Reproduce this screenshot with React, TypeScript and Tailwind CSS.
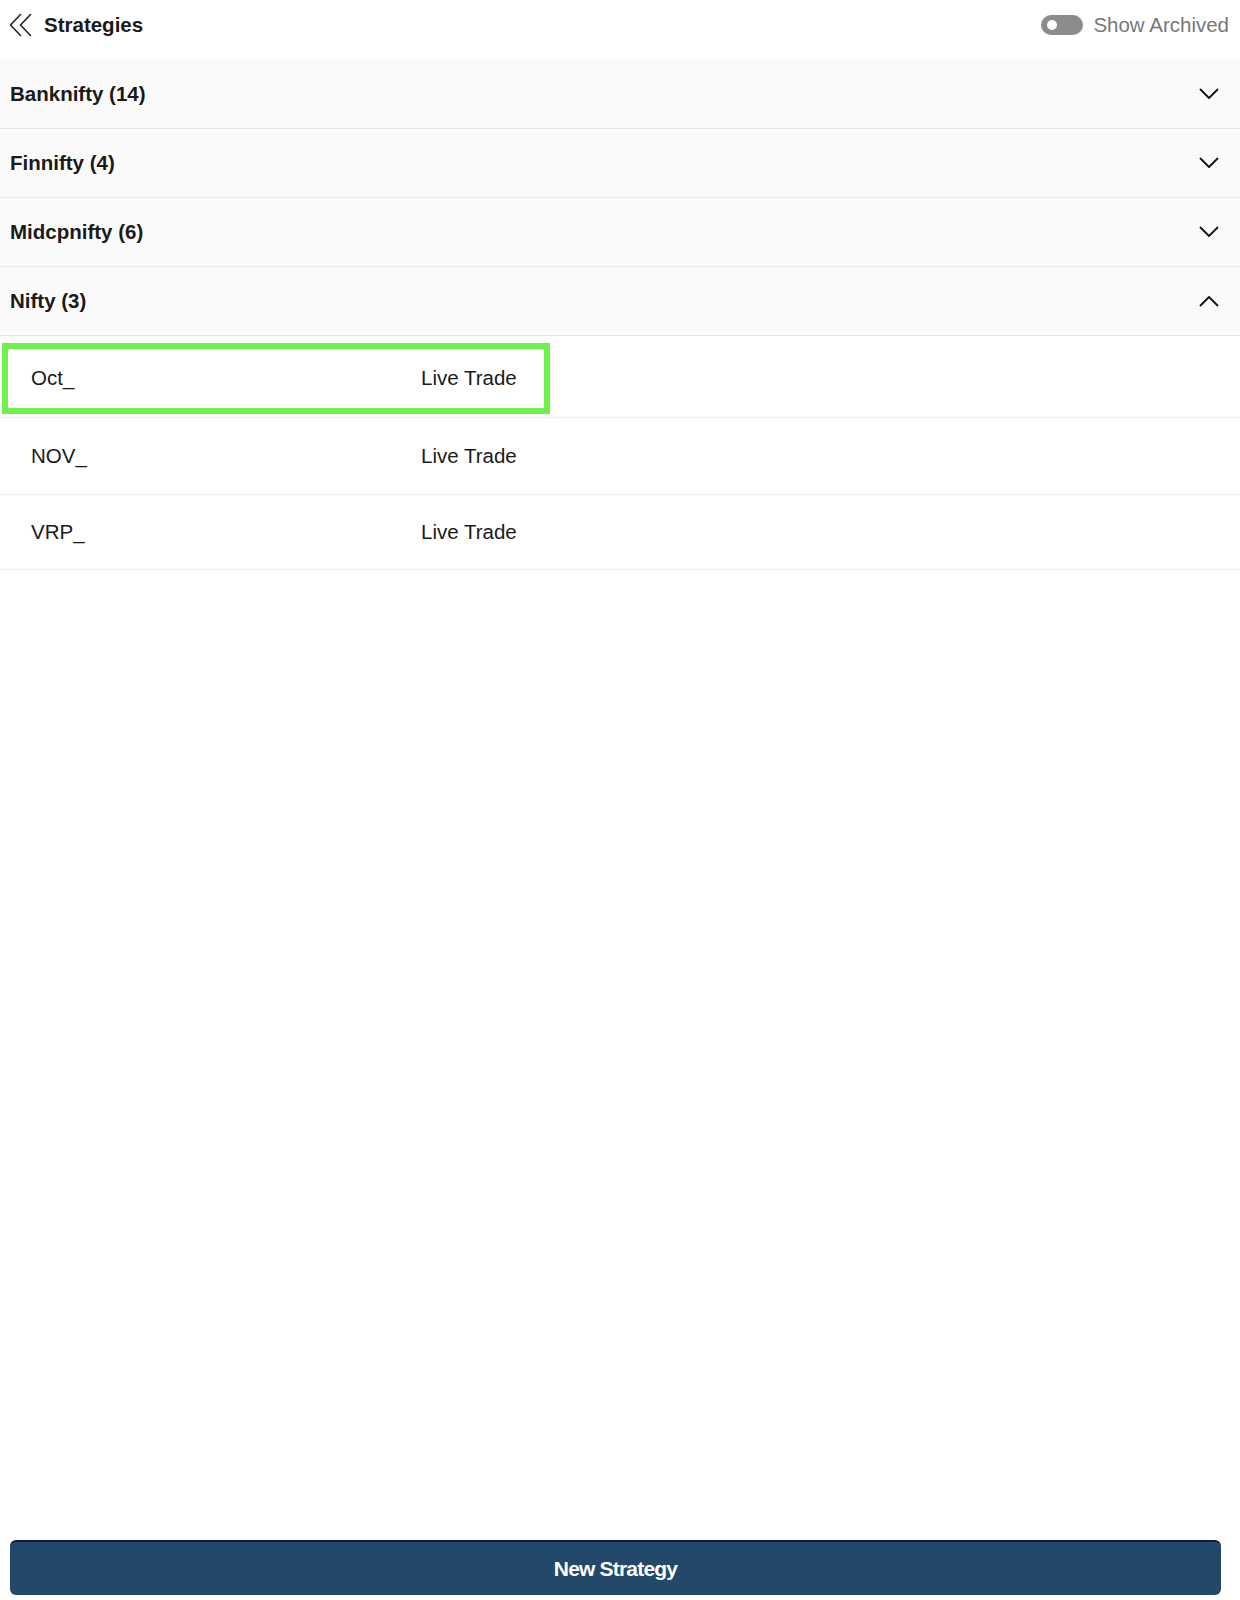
import { useState } from "react";

const groups = [
  { name: "Banknifty", count: 14 },
  { name: "Finnifty", count: 4 },
  { name: "Midcpnifty", count: 6 },
  { name: "Nifty", count: 3 },
];

const niftyItems = [
  { id: 1, name: "Oct_", status: "Live Trade", selected: true },
  { id: 2, name: "NOV_", status: "Live Trade", selected: false },
  { id: 3, name: "VRP_", status: "Live Trade", selected: false },
];

function Chevron({ up }: { up?: boolean }) {
  return (
    <svg width="20" height="12" viewBox="0 0 20 12" fill="none">
      <path
        d={up ? "M1.5 10.5L10 2l8.5 8.5" : "M1.5 1.5L10 10l8.5-8.5"}
        stroke="#111"
        strokeWidth="1.8"
        strokeLinecap="round"
        strokeLinejoin="round"
      />
    </svg>
  );
}

function StrategyRow({
  item,
  height,
}: {
  item: (typeof niftyItems)[number];
  height: string;
}) {
  return (
    <div
      className={`relative flex items-center border-b border-[#ececec] pl-[31px] text-[20.5px] text-[#1a1a1a] ${height}`}
    >
      <span className="w-[390px]">{item.name}</span>
      <span>{item.status}</span>
      {item.selected && (
        <div className="pointer-events-none absolute left-[2px] top-[7px] h-[71px] w-[548px] border-[6px] border-[#6ff04c]" />
      )}
    </div>
  );
}

export default function App() {
  const [open] = useState("Nifty");
  const heights = ["h-[82px] pt-[4px]", "h-[77px]", "h-[75px]"];

  return (
    <div className="flex min-h-[1600px] flex-col bg-white font-['Liberation_Sans',Arial,sans-serif]">
      <div className="h-[60px]">
        <div className="flex h-[50px] items-center justify-between">
          <div className="flex items-center gap-[12px] pl-[9px]">
            <svg width="23" height="24" viewBox="0 0 23 24" fill="none">
              <path
                d="M11.5 1.5L1.5 12l10 10.5M21.5 1.5L11.5 12l10 10.5"
                stroke="#222"
                strokeWidth="1.6"
                strokeLinecap="round"
                strokeLinejoin="round"
              />
            </svg>
            <span className="text-[20.5px] font-bold text-[#1a1a1a]">Strategies</span>
          </div>
          <div className="flex items-center gap-[10px] pr-[11px]">
            <div className="flex h-[20px] w-[42px] items-center rounded-full bg-[#8c8c8c] pl-[6px]">
              <div className="h-[10px] w-[10px] rounded-full bg-white" />
            </div>
            <span className="text-[20.5px] text-[#777]">Show Archived</span>
          </div>
        </div>
      </div>

      <div>
        {groups.map((g) => (
          <div key={g.name}>
            <div className="flex h-[69px] items-center justify-between border-b border-[#e8e8e8] bg-[#fafafa] pl-[10px] pr-[21px]">
              <span className="text-[20.5px] font-bold text-[#1a1a1a]">
                {g.name} ({g.count})
              </span>
              <Chevron up={open === g.name} />
            </div>
            {open === g.name &&
              niftyItems.map((item, i) => (
                <StrategyRow key={item.id} item={item} height={heights[i]} />
              ))}
          </div>
        ))}
      </div>

      <div className="mt-auto pb-[5px] pl-[10px] pr-[19px]">
        <button className="h-[55px] w-full rounded-[6px] border-t-2 border-[#0d2033] bg-[#22486a] text-[21px] font-bold tracking-[-0.8px] text-white">
          New Strategy
        </button>
      </div>
    </div>
  );
}
